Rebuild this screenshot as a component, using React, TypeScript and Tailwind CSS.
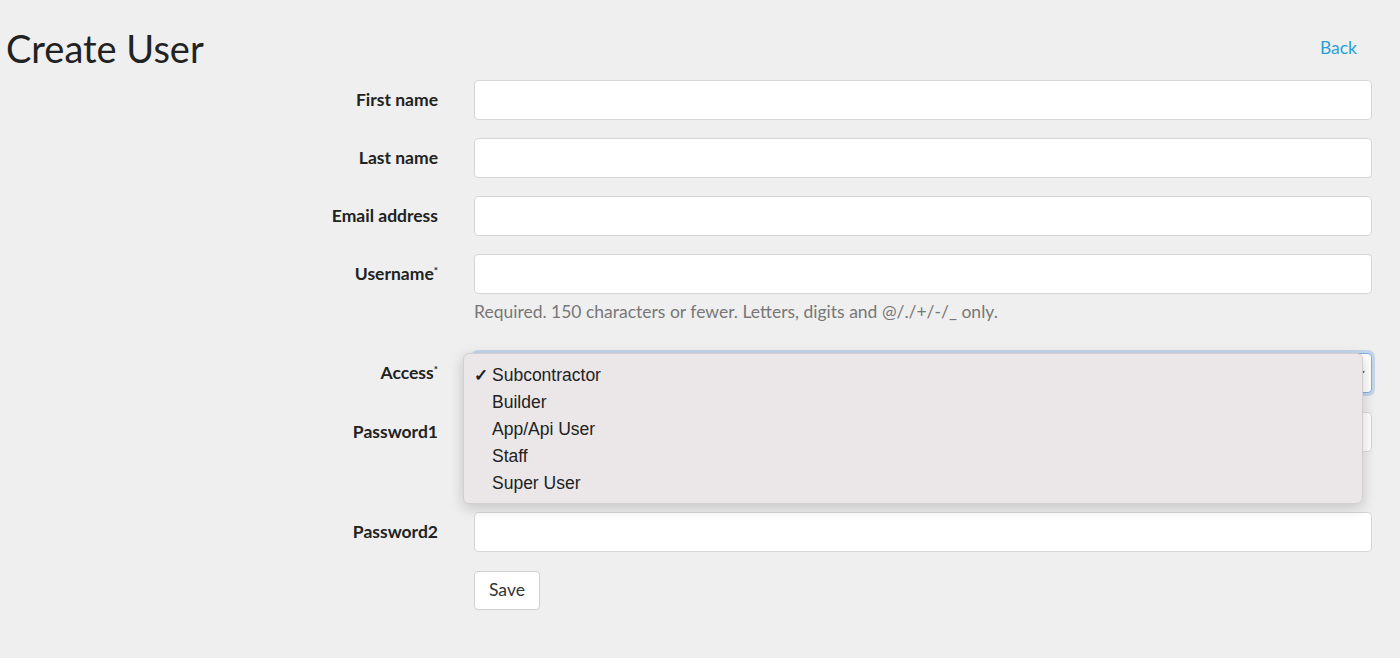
import { ChevronDown } from "lucide-react";

const fields = [
  { label: "First name" },
  { label: "Last name" },
  { label: "Email address" },
];

const accessOptions = ["Subcontractor", "Builder", "App/Api User", "Staff", "Super User"];

const Field = ({ label, required }: { label: string; required?: boolean }) => (
  <div className="flex items-center">
    <label className="w-[438px] shrink-0 text-right text-[17.5px] font-bold text-[#222]">
      {label}
      {required && <sup className="text-[10px] top-[-0.6em]">*</sup>}
    </label>
    <input
      type="text"
      className="ml-[36px] h-[40px] flex-1 rounded-[4px] border border-[#d6d6d6] bg-white px-3 outline-none"
    />
  </div>
);

const CreateUser = () => {
  return (
    <div
      className="min-h-[658px] bg-[#efefef] pr-[28px] text-[#222]"
      style={{ fontFamily: "Lato, 'Open Sans', sans-serif" }}
    >
      {/* Header */}
      <div className="flex items-center justify-between pl-[6px] pr-[15px] pt-[24px]">
        <h1 className="text-[38px] leading-[48px] font-normal">Create User</h1>
        <a className="text-[17.5px] text-[#2a9fd6]">Back</a>
      </div>

      <form className="mt-[8px] flex flex-col">
        <div className="flex flex-col gap-[18px]">
          {fields.map((f) => (
            <Field key={f.label} label={f.label} />
          ))}
          <div>
            <Field label="Username" required />
            <p className="ml-[474px] mt-[8px] text-[17.5px] leading-[20px] text-[#777]">
              Required. 150 characters or fewer. Letters, digits and @/./+/-/_ only.
            </p>
          </div>
        </div>

        {/* Access select with open menu */}
        <div className="mt-[31px] flex items-center">
          <label className="w-[438px] shrink-0 text-right text-[17.5px] font-bold">
            Access<sup className="text-[10px] top-[-0.6em]">*</sup>
          </label>
          <div className="relative ml-[36px] flex-1">
            <div className="flex h-[40px] items-center justify-end rounded-[4px] border border-[#7fb0e6] bg-white pr-[4px] shadow-[0_0_0_3px_rgba(120,170,230,0.35)]">
              <ChevronDown className="h-[12px] w-[12px] text-[#555]" strokeWidth={2.5} />
            </div>
            <div
              className="absolute left-[-11px] right-[9px] top-0 z-10 rounded-[6px] border border-[#d3cfd1] bg-[#ebe7e9] pt-[8px] pb-[6px] shadow-[0_4px_14px_rgba(0,0,0,0.18)]"
              style={{ fontFamily: "'Liberation Sans', Arial, sans-serif" }}
            >
              {accessOptions.map((opt, i) => (
                <div key={opt} className="flex h-[27px] items-center text-[17.5px] text-[#222]">
                  <span className="w-[28px] pl-[10px] text-[17px] font-bold">{i === 0 ? "✓" : ""}</span>
                  <span>{opt}</span>
                </div>
              ))}
            </div>
          </div>
        </div>

        <div className="mt-[19px]">
          <Field label="Password1" />
        </div>
        <div className="mt-[60px]">
          <Field label="Password2" />
        </div>

        <div className="ml-[474px] mt-[19px]">
          <button
            type="button"
            className="h-[39px] rounded-[4px] border border-[#d0d0d0] bg-white px-[14px] text-[17.5px] text-[#333]"
          >
            Save
          </button>
        </div>
      </form>
    </div>
  );
};

export default function App() {
  return <CreateUser />;
}
